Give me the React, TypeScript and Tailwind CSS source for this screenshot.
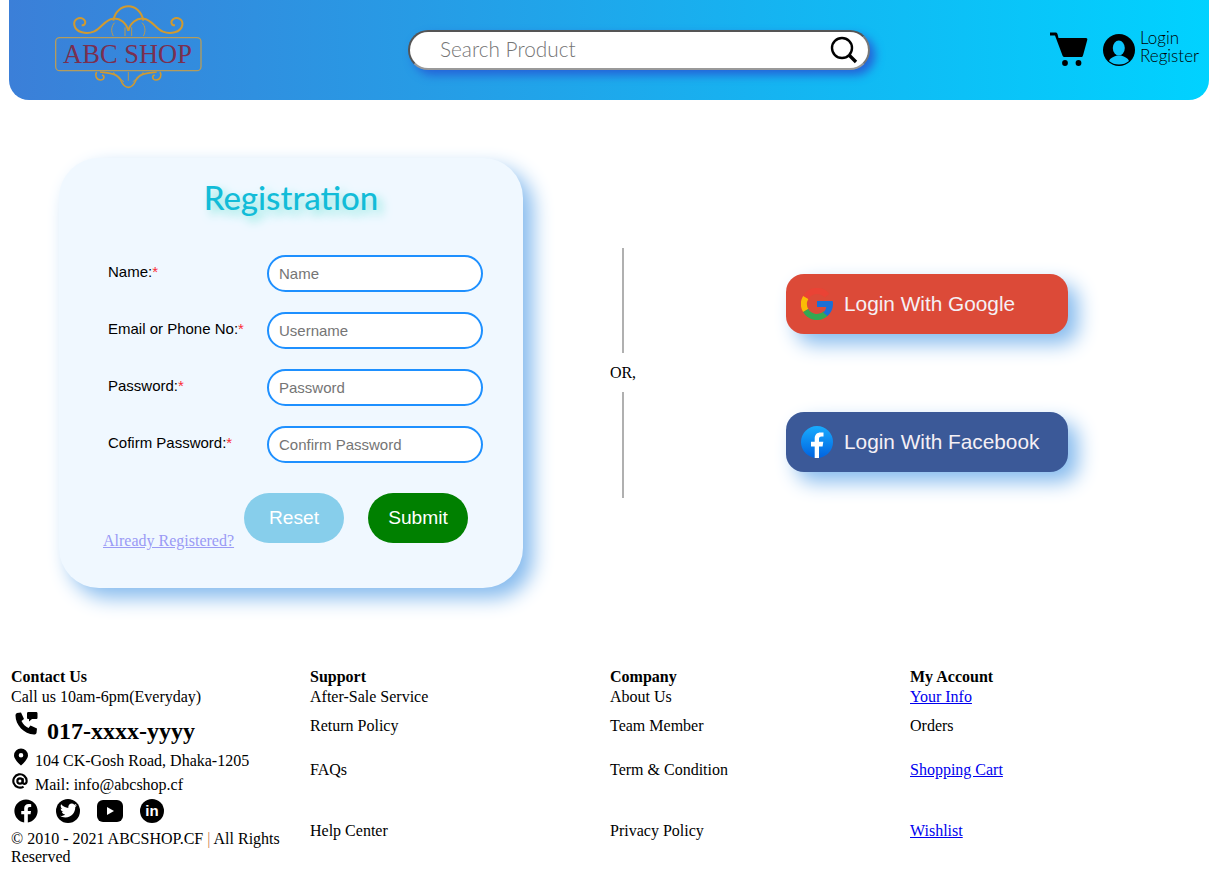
import React from "react";
import { FaFacebook, FaTwitter } from "react-icons/fa";

const ubuntu = "font-['Lato','Open_Sans',sans-serif]";

function Logo() {
  return (
    <div className="relative h-[95px] w-[160px]">
      <svg viewBox="0 0 480 285" className="absolute inset-0 h-full w-full" fill="none" stroke="#d09a30" strokeWidth="6">
        <path d="M190 62c4-26 24-43 45-43s41 17 45 43" />
        <path d="M235 92c-6-24-24-38-46-36-24 2-34 28-58 39-20 8-54 4-58-20-3-16 14-26 27-18 10 7 6 20-5 19" />
        <path d="M235 92c6-24 24-38 46-36 24 2 34 28 58 39 20 8 54 4 58-20 3-16-14-26-27-18-10 7-6 20 5 19" />
        <path d="M190 108c-8-14-6-30 4-40M280 108c8-14 6-30-4-40M225 108V82M245 108V82" strokeWidth="3" stroke="#b99a50" />
        <rect x="17" y="113" width="436" height="99" rx="12" stroke="#b49c5c" strokeWidth="4" />
        <path d="M140 216c-6 8-2 24 12 24 10 0 14-12 4-15" strokeWidth="5" />
        <path d="M330 216c6 8 2 24-12 24-10 0-14-12-4-15" strokeWidth="5" />
        <path d="M150 216c30 4 52 4 62 24 5 12 13 22 23 22s18-10 23-22c10-20 32-20 62-24" strokeWidth="5" />
        <path d="M190 216c6 14 22 18 32 30M280 216c-6 14-22 18-32 30M235 216v26" strokeWidth="3" stroke="#b99a50" />
      </svg>
      <div className="absolute left-[5px] right-[10px] top-[40px] text-center font-['Liberation_Serif',serif] text-[26.5px] leading-[28px] text-[#7a2f50]">
        ABC SHOP
      </div>
    </div>
  );
}

function Cart() {
  return (
    <svg viewBox="0 0 38 36" className="h-[36px] w-[38px]" fill="#000">
      <path d="M0 0.500h5.500c1 0 1.700.6 2 1.500l1 4h27.500c1 0 1.500.8 1.300 1.700l-4.300 15.800c-.3 1-1 1.500-2 1.500H14.500c-1 0-1.800-.6-2-1.500L5 3.400H0z" />
      <circle cx="15" cy="31" r="2.900" />
      <circle cx="28.500" cy="31" r="2.900" />
    </svg>
  );
}

function UserIcon() {
  return (
    <svg viewBox="0 0 32 32" className="h-[32px] w-[32px]">
      <circle cx="16" cy="16" r="16" fill="#000" />
      <ellipse cx="15.800" cy="14" rx="6" ry="7.500" fill="#0cc5fb" />
      <path d="M6 27c1-3 4-4 8-5.500h4c4 1.500 7 2.500 8 5.500-3 2.500-6 3.500-10 3.500s-7-1-10-3.500z" fill="#0cc5fb" />
    </svg>
  );
}

function Header() {
  return (
    <header className="flex h-[100px] items-center rounded-b-[20px] bg-linear-to-r/srgb from-[#3b7fd8] to-[#00d2ff]">
      <div className="ml-[41px] w-[160px] self-start">
        <Logo />
      </div>
      <div className="ml-[198px] flex h-[40px] w-[462px] items-center justify-between rounded-full border-2 border-t-[#555555] border-r-[#777777] border-b-[#999999] border-l-[#555555] bg-white pl-[30px] pr-[10px] shadow-[5px_5px_10px_#2563d8]">
        <span className={`${ubuntu} mt-[-3px] text-[20.8px] font-light text-[#757575]`}>Search Product</span>
        <svg viewBox="0 0 28 28" className="h-[28px] w-[28px]" fill="none" stroke="#000">
          <circle cx="12" cy="12" r="10" strokeWidth="2.400" />
          <path d="M19 19l7 7" strokeWidth="3.400" />
        </svg>
      </div>
      <div className="ml-[180px] flex items-center">
        <Cart />
        <div className="ml-[15px]">
          <UserIcon />
        </div>
        <div className={`${ubuntu} ml-[5px] mt-[-6px] text-[17px] font-light leading-[18px] text-black`}>
          <div>Login</div>
          <div>Register</div>
        </div>
      </div>
    </header>
  );
}

function Field({ label, placeholder }: { label: string; placeholder: string }) {
  return (
    <div className="flex h-[37px] items-start">
      <div className="w-[159px] pt-[7px] text-[15px] leading-[20px] text-black">
        {label}
        <span className="text-red-500">*</span>
      </div>
      <input
        placeholder={placeholder}
        className="h-[37px] w-[216px] rounded-full border-2 border-[#1e90ff] bg-white px-[10px] text-[15px] outline-none placeholder:text-[#757575]"
      />
    </div>
  );
}

function RegistrationCard() {
  return (
    <div className="h-[430px] w-[464px] rounded-[40px] bg-[#f0f8ff] pl-[49px] pt-[20px] font-['Liberation_Sans',sans-serif] shadow-[10px_10px_20px_#86bbee]">
      <h1 className={`${ubuntu} mr-[49px] h-[38px] text-center text-[33px] font-medium leading-[38px] text-[#12bcd8] [text-shadow:5px_5px_10px_#7fe6dc]`}>
        Registration
      </h1>
      <div className="mt-[39px] flex flex-col gap-[20px]">
        <Field label="Name:" placeholder="Name" />
        <Field label="Email or Phone No:" placeholder="Username" />
        <Field label="Password:" placeholder="Password" />
        <Field label="Cofirm Password:" placeholder="Confirm Password" />
      </div>
      <div className="mt-[30px] flex items-start">
        <a href="#" className="ml-[-5px] mt-[38px] w-[141px] font-['Liberation_Serif',serif] text-[16px] leading-[20px] text-[#9a9af5] underline">
          Already Registered?
        </a>
        <button className="h-[50px] w-[100px] rounded-full bg-[#87ceeb] text-[19.2px] text-white">Reset</button>
        <button className="ml-[24px] h-[50px] w-[100px] rounded-full bg-[#008000] text-[19.2px] text-white">Submit</button>
      </div>
    </div>
  );
}

function GoogleIcon() {
  return (
    <svg viewBox="0 0 32 32" className="h-[32px] w-[32px]" fill="none">
      <path d="M26 7.600A13 13 0 0 0 4.700 9.500" stroke="#ea4335" strokeWidth="6" />
      <path d="M4.700 9.500a13 13 0 0 0 0 13" stroke="#fbbc05" strokeWidth="6" />
      <path d="M4.700 22.500A13 13 0 0 0 25 25.400" stroke="#34a853" strokeWidth="6" />
      <path d="M16 13h15.600c.3 1 .4 2 .4 3 0 4.800-2.100 9-5.500 12l-4.300-3.600c1.500-1.200 2.700-3 3.100-5.400H16z" fill="#1a6fd6" />
    </svg>
  );
}

function FacebookIcon() {
  return (
    <svg viewBox="0 0 32 32" className="h-[32px] w-[32px]">
      <defs>
        <linearGradient id="fbg" x1="0" y1="0" x2="0" y2="1">
          <stop offset="0" stopColor="#18acfe" />
          <stop offset="1" stopColor="#0163e0" />
        </linearGradient>
      </defs>
      <circle cx="16" cy="16" r="16" fill="url(#fbg)" />
      <path d="M13.700 32V20.400H10v-4.600h3.700v-3.400c0-3.900 2.300-6 5.800-6 1.700 0 3 .2 3 .2v3.900h-2c-2 0-2.500 1.200-2.500 2.400v2.900h4.300l-.7 4.600h-3.600V32z" fill="#fff" />
    </svg>
  );
}

function SocialButton({ color, icon, label }: { color: string; icon: React.ReactNode; label: string }) {
  return (
    <button className={`flex h-[60px] w-[282px] items-center gap-[11px] rounded-[18px] pl-[15px] font-['Liberation_Sans',sans-serif] text-[20.8px] text-[#f5f0f5] shadow-[10px_10px_20px_#86bbee] ${color}`}>
      {icon}
      <span>{label}</span>
    </button>
  );
}

function Main() {
  return (
    <main className="flex h-[568px] pt-[58px]">
      <div className="ml-[50px]">
        <RegistrationCard />
      </div>
      <div className="ml-[87px] mt-[90px] flex w-[26px] flex-col items-center">
        <div className="h-[105px] w-[2px] bg-[#b0b0b0]" />
        <div className="flex h-[39px] items-center font-['Liberation_Serif',serif] text-[16px] text-black">OR,</div>
        <div className="h-[106px] w-[2px] bg-[#b0b0b0]" />
      </div>
      <div className="ml-[150px] mt-[116px] flex flex-col gap-[78px]">
        <SocialButton color="bg-[#dc4a38]" icon={<GoogleIcon />} label="Login With Google" />
        <SocialButton color="bg-[#3b5998]" icon={<FacebookIcon />} label="Login With Facebook" />
      </div>
    </main>
  );
}

function FooterLink({ children }: { children: React.ReactNode }) {
  return (
    <a href="#" className="text-[#0000ee] underline">
      {children}
    </a>
  );
}

function Footer() {
  return (
    <footer className="grid grid-cols-[299px_300px_300px_300px] grid-rows-[18px_18px_36px_48px_70px] items-center gap-y-[2px] pl-[2px] font-['Liberation_Serif',serif] text-[16px] leading-[18px] text-black">
      <b>Contact Us</b>
      <b>Support</b>
      <b>Company</b>
      <b>My Account</b>

      <div>Call us 10am-6pm(Everyday)</div>
      <div>After-Sale Service</div>
      <div>About Us</div>
      <div>
        <FooterLink>Your Info</FooterLink>
      </div>

      <div className="flex h-[36px] items-start">
        <svg viewBox="0 0 24 24" className="ml-[3px] mt-[3px] h-[24px] w-[24px] shrink-0" fill="#000">
          <path d="M3 2l4-.5L10 8 7.500 10c1.500 3.500 4 5.500 7 7l2-2.500 6.500 3-.5 4.500c-.5 1-1.500 1.500-2.500 1.500C10 23 1.500 14 1.500 4.500c0-1 .5-2 1.500-2.500z" />
          <path d="M14.500 1h7.500c1 0 1.500.5 1.500 1.500v4c0 1-.5 1.500-1.500 1.500h-4l-3 2.500V8h-.5c-1 0-1.500-.5-1.500-1.500v-4c0-1 .5-1.500 1.500-1.500z" />
        </svg>
        <span className="ml-[9px] mt-[9px] text-[24px] font-bold leading-[28px]">017-xxxx-yyyy</span>
      </div>
      <div>Return Policy</div>
      <div>Team Member</div>
      <div>Orders</div>

      <div className="flex h-[48px] flex-col">
        <div className="flex h-[24px] items-start">
          <svg viewBox="0 0 16 18" className="ml-[2px] mt-[2px] h-[18px] w-[16px] shrink-0" fill="#000">
            <path fillRule="evenodd" d="M8 0.500a7 7 0 0 1 7 7C15 11.500 8 17.500 8 17.500S1 11.500 1 7.500a7 7 0 0 1 7-7zm0 4.500a2.300 2.300 0 1 0 0 4.600 2.300 2.300 0 0 0 0-4.600z" />
          </svg>
          <span className="ml-[6px] mt-[6px]">104 CK-Gosh Road, Dhaka-1205</span>
        </div>
        <div className="flex h-[24px] items-start">
          <svg viewBox="0 0 18 18" fill="none" stroke="#000" strokeWidth="2.400" className="ml-[1px] mt-[3px] h-[16px] w-[16px] shrink-0">
            <circle cx="9" cy="9" r="3" />
            <path d="M12 6v4.500c0 2.500 4.500 2.500 4.500-1.500A7.500 7.500 0 1 0 13 15.300" />
          </svg>
          <span className="ml-[7px] mt-[6px]">Mail: info@abcshop.cf</span>
        </div>
      </div>
      <div>FAQs</div>
      <div>Term &amp; Condition</div>
      <div>
        <FooterLink>Shopping Cart</FooterLink>
      </div>

      <div className="flex flex-col">
        <div className="ml-[3px] flex h-[28px] items-center">
          <FaFacebook size={24} />
          <span className="ml-[18px] flex h-[24px] w-[24px] items-center justify-center rounded-full bg-black">
            <FaTwitter size={17} color="#fff" />
          </span>
          <svg viewBox="0 0 26 22" className="ml-[17px] h-[22px] w-[26px]">
            <rect width="26" height="22" rx="6" fill="#000" />
            <path d="M10 7l7 4-7 4z" fill="#fff" />
          </svg>
          <span className="ml-[17px] flex h-[24px] w-[24px] items-center justify-center rounded-full bg-black">
            <span className="font-['Liberation_Sans',sans-serif] text-[15px] font-bold leading-none text-white">in</span>
          </span>
        </div>
        <div className="mt-[5px] w-[280px]">
          © 2010 - 2021 ABCSHOP.CF <span className="text-[#d08050]">|</span> All Rights Reserved
        </div>
      </div>
      <div>Help Center</div>
      <div>Privacy Policy</div>
      <div>
        <FooterLink>Wishlist</FooterLink>
      </div>
    </footer>
  );
}

export default function App() {
  return (
    <div className="ml-[9px] w-[1200px]">
      <Header />
      <Main />
      <Footer />
    </div>
  );
}
